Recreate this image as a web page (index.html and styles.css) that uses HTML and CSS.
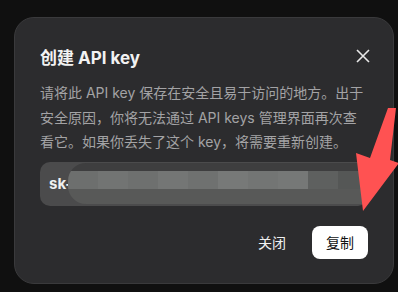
FILE: index.html
```html
<!DOCTYPE html>
<html lang="zh-CN">
  <head>
    <meta charset="UTF-8" />
    <link rel="stylesheet" href="styles.css">
  </head>
  <body>
    <div class="dialog">
      <div class="dialog-head">
        <h2 class="title">创建 API key</h2>
        <svg class="close" width="14" height="14" viewBox="0 0 14 14">
          <path d="M1 1L13 13M13 1L1 13" stroke="#e8e8e8" stroke-width="1.6" fill="none"/>
        </svg>
      </div>
      <p class="text">请将此 API key 保存在安全且易于访问的地方。出于安全原因，你将无法通过 API keys 管理界面再次查看它。如果你丢失了这个 key，将需要重新创建。</p>
      <div class="key-box">
        <span class="key-prefix">sk-</span>
        <div class="key-mask">
          <div class="mask-top"></div>
          <div class="mask-mid">
            <i style="background:#6d6f6e"></i>
            <i style="background:#727473"></i>
            <i style="background:#6e706f"></i>
            <i style="background:#747675"></i>
            <i style="background:#6f7170"></i>
            <i style="background:#777978"></i>
            <i style="background:#737574"></i>
            <i style="background:#767877"></i>
            <i style="background:#5e605f"></i>
            <i style="background:#555756"></i>
          </div>
          <div class="mask-bot"></div>
        </div>
      </div>
      <div class="actions">
        <button class="btn btn-ghost">关闭</button>
        <button class="btn btn-white">复制</button>
      </div>
    </div>

    <svg class="arrow" width="398" height="292" viewBox="0 0 398 292">
      <polygon points="388,108 396,108 390,160 399,163 363,211 356,153 370,158" fill="#ff5252"/>
    </svg>
  </body>
</html>
```

FILE: styles.css
```css
body {
  margin: 0;
  width: 398px;
  height: 292px;
  background: #101010;
  font-family: "Inter", "Noto Sans CJK SC", sans-serif;
  overflow: hidden;
}
.dialog {
  margin: 17px 0 0 14px;
  width: 380px;
  box-sizing: border-box;
  padding: 25px 25px 24px 25px;
  background: #2c2c2e;
  border: 1px solid #3a3a3c;
  border-radius: 20px;
}
.dialog-head {
  display: flex;
  align-items: center;
  justify-content: space-between;
  height: 28px;
  margin-top: -1px;
}
.title {
  margin: 0;
  font-size: 17px;
  font-weight: 700;
  color: #f2f2f2;
}
.close {
  margin-right: -2px;
}
.text {
  margin: 11px 0 0 0;
  font-size: 14px;
  line-height: 24.5px;
  color: #a3a3a5;
}
.key-box {
  margin-top: 7px;
  height: 44px;
  display: flex;
  align-items: stretch;
  background: #4b4b4c;
  border-radius: 10px;
  overflow: hidden;
}
.key-prefix {
  padding-left: 9px;
  width: 19px;
  align-self: center;
  font-size: 15px;
  font-weight: 700;
  color: #f0f0f0;
}
.key-mask {
  flex: 1;
  display: flex;
  flex-direction: column;
  margin: 1px 0 2px 0;
  border-radius: 18px 0 0 18px;
  overflow: hidden;
}
.mask-top {
  height: 8px;
  background: #3e3e3f;
}
.mask-mid {
  height: 18px;
  display: flex;
}
.mask-mid i {
  flex: 1;
}
.mask-bot {
  flex: 1;
  background: #585958;
}
.actions {
  display: flex;
  justify-content: flex-end;
  gap: 12px;
  margin-top: 20px;
}
.btn {
  height: 33px;
  width: 56px;
  border: none;
  border-radius: 8px;
  font-family: "Noto Sans CJK SC", sans-serif;
  font-size: 14px;
  cursor: pointer;
}
.btn-ghost {
  background: transparent;
  color: #f0f0f0;
}
.btn-white {
  background: #ffffff;
  color: #111111;
}
.arrow {
  position: absolute;
  left: 0;
  top: 0;
  pointer-events: none;
}
```
